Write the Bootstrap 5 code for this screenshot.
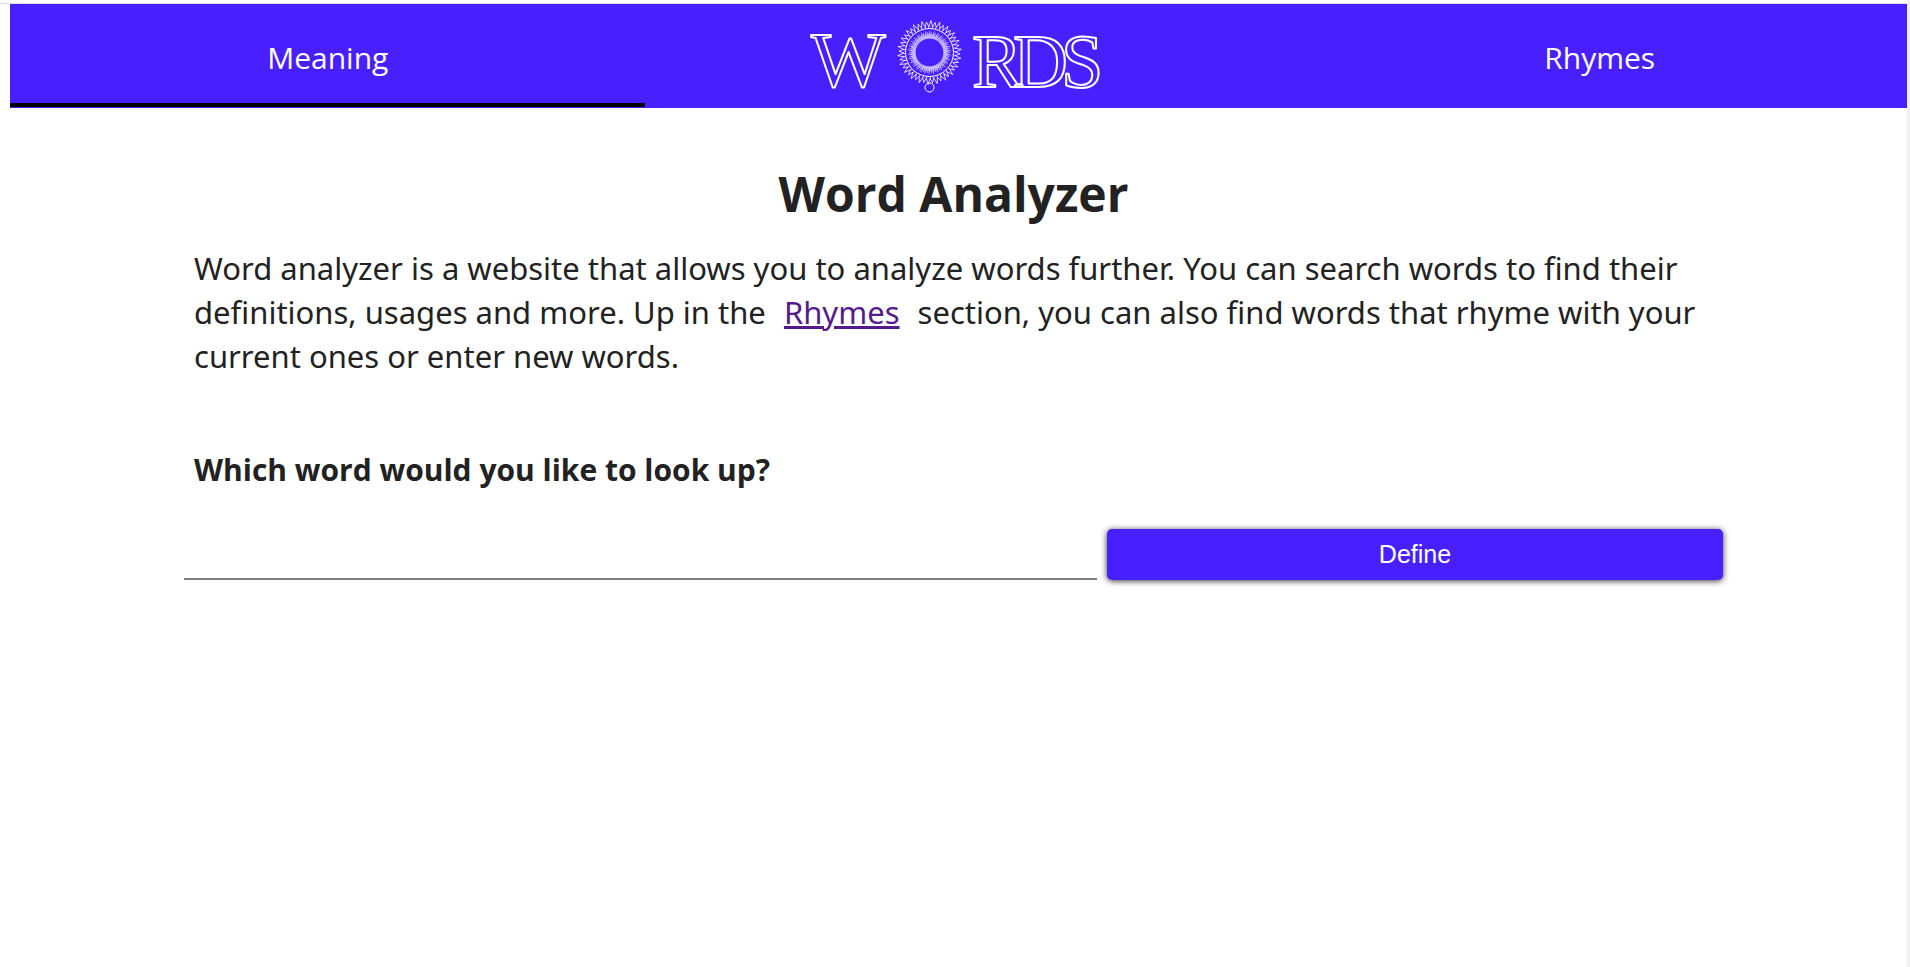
<!DOCTYPE html>
<html lang="en">
<head>
<meta charset="utf-8">
<meta name="viewport" content="width=device-width, initial-scale=1">
<title>Word Analyzer</title>
<link href="https://cdn.jsdelivr.net/npm/bootstrap@5.3.0/dist/css/bootstrap.min.css" rel="stylesheet">
<style>
  :root { --brand: #481fff; --ink: #222; }
  body { font-family: "Open Sans", "Noto Sans", sans-serif; color: var(--ink); }
  .page-shell { border-right: 3px solid #f1f1f1; }
  .top-line { border-top: 1px solid #dcdcdc; margin-top: 3px; }
  .site-nav { background: var(--brand); margin-left: 10px; display: grid; grid-template-columns: 33.5% 34.1% 32.4%; height: 104px; }
  .nav-tab { color: #fff; font-size: 30px; text-decoration: none; padding-top: 3px; margin-bottom: 1px; }
  .nav-tab.active { box-shadow: inset 0 -4px #000; }
  .site-main { width: 80.7%; padding-top: 56px; }
  h1 { font-size: 48px; font-weight: 700; line-height: 60px; }
  .intro, .ask { padding: 0 10px; line-height: 44px; }
  .intro { font-family: "Noto Sans", "Open Sans", sans-serif; font-size: 31px; margin: 22px 0 70px; }
  .intro a { color: #551a8b; margin: 0 10px; }
  .ask { font-size: 30px; font-weight: 700; margin-bottom: 37px; }
  .lookup { display: grid; grid-template-columns: 913fr 616fr; gap: 10px; }
  .word-input { border: 0; border-bottom: 2px solid gray; border-radius: 0; font-size: 25px; height: 51px; }
  .btn-define { background: var(--brand); color: #fff; font: 25px "Liberation Sans", Arial, sans-serif; border: 0; border-radius: 5px; box-shadow: 0 1px 6px rgba(0,0,0,.8); }
  .btn-define:hover { background: #3a14e0; color: #fff; }
</style>
</head>
<body>
<div class="page-shell min-vh-100 overflow-hidden">
  <header class="top-line">
    <nav class="site-nav" aria-label="Main">
      <a class="nav-tab active d-flex align-items-center justify-content-center" href="#meaning" aria-current="page">Meaning</a>
      <a class="d-flex align-items-center justify-content-center" href="#home" aria-label="Words">
        <svg id="logo" width="330" height="104" viewBox="804 4 330 104" fill="none" stroke="#fff" aria-hidden="true">
          <g font-family="Liberation Serif, serif" stroke-width="2" stroke-linejoin="round">
            <text x="811" y="86" font-size="79">W</text>
            <text x="972 1013 1061" y="87" font-size="76">RDS</text>
          </g>
          <circle cx="929.5" cy="52.5" r="24" stroke-width="1"/>
          <circle cx="929.5" cy="87.5" r="4.5" stroke-width="1"/>
          <g id="rays" stroke-width=".8"></g>
        </svg>
      </a>
      <a class="nav-tab d-flex align-items-center justify-content-center" href="#rhymes">Rhymes</a>
    </nav>
  </header>
  <main class="site-main mx-auto">
    <h1 class="text-center mb-0">Word Analyzer</h1>
    <p class="intro">Word analyzer is a website that allows you to analyze words further. You can search words to find their definitions, usages and more. Up in the <a href="#rhymes">Rhymes</a> section, you can also find words that rhyme with your current ones or enter new words.</p>
    <form onsubmit="return false">
      <label class="ask d-block" for="word">Which word would you like to look up?</label>
      <div class="lookup">
        <input class="word-input form-control shadow-none" id="word" type="text" autocomplete="off">
        <button class="btn btn-define" type="submit">Define</button>
      </div>
    </form>
  </main>
</div>
<script src="https://cdn.jsdelivr.net/npm/bootstrap@5.3.0/dist/js/bootstrap.bundle.min.js"></script>
<script>
  // Sun emblem: pointed outer petals and a fine inner fringe.
  const cx = 929.5, cy = 52.5;
  const at = (r, a) => (cx + r * Math.cos(a)).toFixed(2) + ' ' + (cy + r * Math.sin(a)).toFixed(2);
  let petals = '', fringe = '';
  const n = 44, step = 2 * Math.PI / n;
  for (let i = 0; i < n; i++) {
    const a = i * step;
    petals += `M${at(24.5, a - step * .3)}L${at(i % 2 ? 32 : 30.5, a + step * .3)}L${at(25.5, a + step * .9)}`;
  }
  for (let i = 0; i < 150; i++) {
    const a = i * Math.PI / 75;
    fringe += `M${at(14, a)}L${at(17.5 + (i * 7 % 5), a + .04)}`;
  }
  document.getElementById('rays').innerHTML =
    `<path d="${petals}"/><path d="${fringe}" stroke-opacity=".75"/>`;
</script>
</body>
</html>
